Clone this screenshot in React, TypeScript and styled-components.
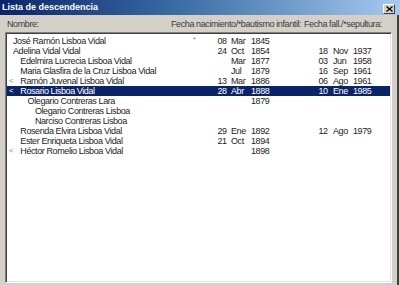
import React from "react";
import styled, { createGlobalStyle } from "styled-components";

const Global = createGlobalStyle`
  html, body { margin: 0; padding: 0; background: #d4d0c8; }
  body { width: 400px; height: 285px; overflow: hidden; }
`;

const Window = styled.div`
  width: 400px;
  height: 285px;
  background: #d4d0c8;
  display: flex;
  flex-direction: column;
  box-shadow: inset -1px 0 0 #d4d0c8, inset -3px 0 0 #404040;
  font-family: "Liberation Sans", Arial, sans-serif;
  overflow: hidden;
`;

const TitleBar = styled.div`
  height: 15px;
  flex: none;
  display: flex;
  align-items: center;
  padding-left: 2px;
  padding-right: 5px;
  background: linear-gradient(to right, #0a246a 0%, #3a6ea5 45%, #a6caf0 100%);
`;

const Title = styled.span`
  flex: 1;
  color: #fff;
  font-weight: bold;
  font-size: 9px;
  line-height: 15px;
`;

const CloseButton = styled.div`
  width: 12px;
  height: 10px;
  margin-top: 2px;
  box-sizing: border-box;
  background: #d4d0c8;
  border-top: 1px solid #fff;
  border-left: 1px solid #fff;
  border-right: 1px solid #404040;
  border-bottom: 1px solid #404040;
  display: flex;
  align-items: center;
  justify-content: center;
`;

const Header = styled.div`
  height: 17px;
  flex: none;
  display: grid;
  grid-template-columns: 164px 133px 1fr;
  align-items: center;
  padding-left: 7px;
  font-size: 9px;
  letter-spacing: -0.4px;
  white-space: nowrap;
  color: #3a3a3a;
`;

const ListBox = styled.div`
  margin-left: 5px;
  width: 387px;
  height: 251px;
  box-sizing: border-box;
  background: #fff;
  border-top: 1px solid #808080;
  border-left: 1px solid #808080;
  border-right: 1px solid #fff;
  border-bottom: 1px solid #fff;
  box-shadow: inset 1px 1px 0 #404040, inset -1px -1px 0 #e4e2dc;
  padding: 3px 1px 0 1px;
  display: flex;
  flex-direction: column;
`;

const Row = styled.div<{ $selected?: boolean }>`
  height: 10px;
  display: grid;
  grid-template-columns: 6px 177px 10px 27px 24px 39px 38px 25px 1fr;
  align-items: center;
  font-size: 9px;
  letter-spacing: -0.4px;
  line-height: 10px;
  white-space: nowrap;
  color: ${(p) => (p.$selected ? "#fff" : "#1c1c1c")};
  background: ${(p) => (p.$selected ? "#0a246a" : "transparent")};
`;

const Marker = styled.span<{ $selected?: boolean }>`
  padding-left: 2px;
  font-size: 8px;
  color: ${(p) => (p.$selected ? "#fff" : "#8a8a8a")};
`;

const Name = styled.span<{ $level: number }>`
  padding-left: ${(p) => p.$level * 7.3}px;
  overflow: hidden;
`;

const Star = styled.span`
  font-size: 7px;
  line-height: 7px;
  color: #777;
  align-self: start;
  padding-left: 3px;
`;

const Day = styled.span`
  text-align: right;
  padding-right: 0.4px;
`;

const Month = styled.span<{ $pad: number }>`
  padding-left: ${(p) => p.$pad}px;
`;

const Year = styled.span``;

type Entry = {
  name: string;
  level: number;
  marker?: boolean;
  star?: boolean;
  selected?: boolean;
  b?: [string, string, string];
  d?: [string, string, string];
};

const rows: Entry[] = [
  { name: "José Ramón Lisboa Vidal", level: 0, star: true, b: ["08", "Mar", "1845"] },
  { name: "Adelina Vidal Vidal", level: 0, b: ["24", "Oct", "1854"], d: ["18", "Nov", "1937"] },
  { name: "Edelmira Lucrecia Lisboa Vidal", level: 1, b: ["", "Mar", "1877"], d: ["03", "Jun", "1958"] },
  { name: "Maria Glasfira de la Cruz Lisboa Vidal", level: 1, b: ["", "Jul", "1879"], d: ["16", "Sep", "1961"] },
  { name: "Ramón Juvenal Lisboa Vidal", level: 1, marker: true, b: ["13", "Mar", "1886"], d: ["06", "Ago", "1961"] },
  { name: "Rosario Lisboa Vidal", level: 1, marker: true, selected: true, b: ["28", "Abr", "1888"], d: ["10", "Ene", "1985"] },
  { name: "Olegario Contreras Lara", level: 2, b: ["", "", "1879"] },
  { name: "Olegario Contreras Lisboa", level: 3 },
  { name: "Narciso Contreras Lisboa", level: 3 },
  { name: "Rosenda Elvira Lisboa Vidal", level: 1, b: ["29", "Ene", "1892"], d: ["12", "Ago", "1979"] },
  { name: "Ester Enriqueta Lisboa Vidal", level: 1, b: ["21", "Oct", "1894"] },
  { name: "Héctor Romelio Lisboa Vidal", level: 1, marker: true, b: ["", "", "1898"] },
];

export default function App() {
  return (
    <>
      <Global />
      <Window>
        <TitleBar>
          <Title>Lista de descendencia</Title>
          <CloseButton>
            <svg width="7" height="6" viewBox="0 0 7 6">
              <path d="M0.5 0.5 L6.5 5.5 M6.5 0.5 L0.5 5.5" stroke="#000" strokeWidth="1.3" />
            </svg>
          </CloseButton>
        </TitleBar>
        <Header>
          <span>Nombre:</span>
          <span>Fecha nacimiento/*bautismo infantil:</span>
          <span>Fecha fall./*sepultura:</span>
        </Header>
        <ListBox>
          {rows.map((r, i) => (
            <Row key={i} $selected={r.selected}>
              <Marker $selected={r.selected}>{r.marker ? "<" : ""}</Marker>
              <Name $level={r.level}>{r.name}</Name>
              <Star>{r.star ? "*" : ""}</Star>
              <Day>{r.b?.[0] ?? ""}</Day>
              <Month $pad={4}>{r.b?.[1] ?? ""}</Month>
              <Year>{r.b?.[2] ?? ""}</Year>
              <Day>{r.d?.[0] ?? ""}</Day>
              <Month $pad={5}>{r.d?.[1] ?? ""}</Month>
              <Year>{r.d?.[2] ?? ""}</Year>
            </Row>
          ))}
        </ListBox>
      </Window>
    </>
  );
}
